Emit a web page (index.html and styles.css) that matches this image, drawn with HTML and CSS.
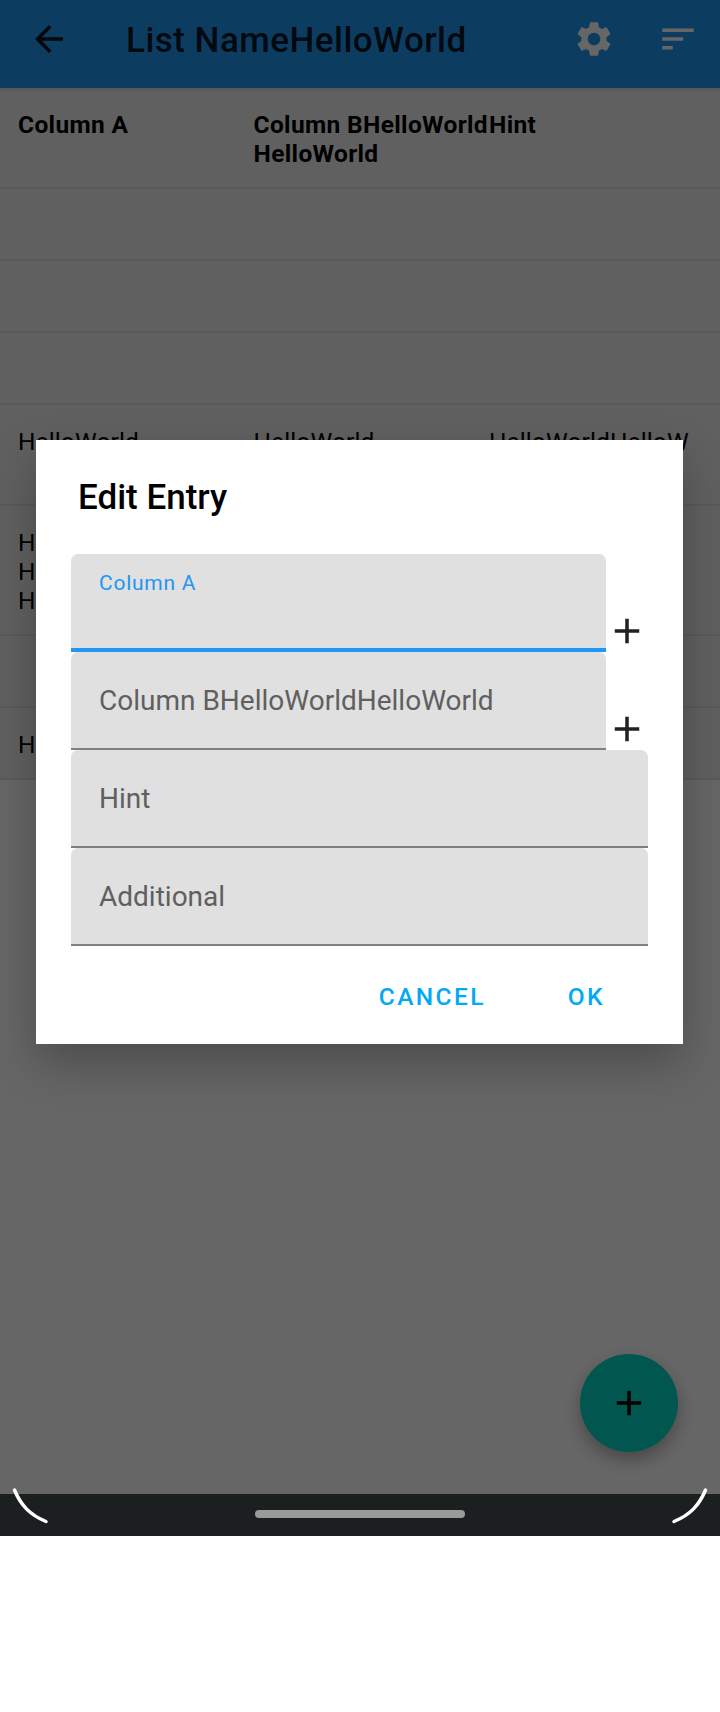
FILE: index.html
```html
<!DOCTYPE html>
<html lang="en">
<head>
<meta charset="utf-8">
<title>List</title>
<link rel="stylesheet" href="styles.css">
</head>
<body>
<div class="screen">
  <header class="appbar">
    <svg class="icon icon-back" viewBox="0 0 24 24"><path d="M20 11H7.83l5.59-5.59L12 4l-8 8 8 8 1.41-1.41L7.83 13H20v-2z"/></svg>
    <h1 class="appbar-title">List NameHelloWorld</h1>
    <svg class="icon icon-light" viewBox="0 0 24 24"><path d="M19.14 12.94c.04-.3.06-.61.06-.94 0-.32-.02-.64-.07-.94l2.03-1.58c.18-.14.23-.41.12-.61l-1.92-3.32c-.12-.22-.37-.29-.59-.22l-2.39.96c-.5-.38-1.03-.7-1.62-.94l-.36-2.54c-.04-.24-.24-.41-.48-.41h-3.84c-.24 0-.43.17-.47.41l-.36 2.54c-.59.24-1.13.57-1.62.94l-2.39-.96c-.22-.08-.47 0-.59.22L2.74 8.87c-.12.21-.08.47.12.61l2.03 1.58c-.05.3-.09.63-.09.94s.02.64.07.94l-2.03 1.58c-.18.14-.23.41-.12.61l1.92 3.32c.12.22.37.29.59.22l2.39-.96c.5.38 1.03.7 1.62.94l.36 2.54c.05.24.24.41.48.41h3.84c.24 0 .44-.17.47-.41l.36-2.54c.59-.24 1.13-.56 1.62-.94l2.39.96c.22.08.47 0 .59-.22l1.92-3.32c.12-.22.07-.47-.12-.61l-2.01-1.58zM12 15.6c-1.98 0-3.6-1.62-3.6-3.6s1.62-3.6 3.6-3.6 3.6 1.62 3.6 3.6-1.62 3.6-3.6 3.6z"/></svg>
    <svg class="icon icon-light" viewBox="0 0 24 24"><path d="M3 18h6v-2H3v2zM3 6v2h18V6H3zm0 7h12v-2H3v2z"/></svg>
  </header>
  <main class="content">
    <div class="row row-head"><span>Column A</span><span>Column BHelloWorld<br>HelloWorld</span><span>Hint</span></div>
    <div class="row"></div>
    <div class="row"></div>
    <div class="row"></div>
    <div class="row"><span>HelloWorld</span><span>HelloWorld</span><span>HelloWorldHelloWorld</span></div>
    <div class="row"><span>HelloWorld HelloWorld HelloWorld</span></div>
    <div class="row"></div>
    <div class="row"><span>HelloWorld</span></div>
  </main>
  <button class="fab"><svg class="icon" viewBox="0 0 24 24"><path d="M19 13h-6v6h-2v-6H5v-2h6V5h2v6h6v2z"/></svg></button>
  <div class="scrim">
    <section class="dialog">
      <h2 class="dialog-title">Edit Entry</h2>
      <div class="entry">
        <div class="field field-active"><span class="label">Column A</span></div>
        <svg class="icon icon-add" viewBox="0 0 24 24"><path d="M19 13h-6v6h-2v-6H5v-2h6V5h2v6h6v2z"/></svg>
      </div>
      <div class="entry">
        <div class="field">Column BHelloWorldHelloWorld</div>
        <svg class="icon icon-add" viewBox="0 0 24 24"><path d="M19 13h-6v6h-2v-6H5v-2h6V5h2v6h6v2z"/></svg>
      </div>
      <div class="entry"><div class="field">Hint</div></div>
      <div class="entry"><div class="field">Additional</div></div>
      <div class="actions"><button class="action">CANCEL</button><button class="action">OK</button></div>
    </section>
  </div>
  <footer class="navbar"><span class="pill"></span></footer>
  <svg class="corner corner-left" viewBox="0 0 40 40"><path d="M4.500 4C11 19.500 20 29 36 35.500"/></svg>
  <svg class="corner corner-right" viewBox="0 0 40 40"><path d="M4.500 4C11 19.500 20 29 36 35.500"/></svg>
</div>
</body>
</html>
```

FILE: styles.css
```css
* { box-sizing: border-box; }
body { margin: 0; background: #fff; font-family: Roboto, sans-serif; color: #000; }
h1, h2 { margin: 0; font-weight: 500; }
button { border: 0; padding: 0; font: inherit; background: none; }

.screen { position: relative; width: 720px; height: 1536px; display: flex; flex-direction: column; overflow: hidden; background: #fff; }
.icon { width: 42px; height: 42px; flex: none; display: block; }
.icon-light { fill: #fff; }
.icon-back { fill: rgba(0, 0, 0, .87); }

.appbar { height: 88px; flex: none; display: flex; padding: 18px 21px 0 28px; background: #2196f3; box-shadow: 0 1px 4px rgba(0, 0, 0, .2); z-index: 1; }
.appbar-title { flex: 1; margin-left: 56px; padding-top: 2px; color: rgba(0, 0, 0, .87); font-size: 35px; line-height: 42px; letter-spacing: .48px; white-space: nowrap; }
.appbar .icon-light + .icon-light { margin-left: 42px; }

.content { flex: 1; }
.row { min-height: 72px; display: grid; grid-template-columns: 200px 200px 200px; column-gap: 35.5px; padding: 22px 0 19px 18px; border-bottom: 2px solid #e0e0e0; background: #f1f1f1; font-size: 24.5px; line-height: 29px; letter-spacing: .12px; overflow-wrap: anywhere; }
.row-head { grid-template-columns: 235.5px 235.5px 200px; column-gap: 0; font-weight: 700; letter-spacing: .35px; }
.row-head span { white-space: nowrap; }

.fab { position: absolute; right: 42px; bottom: 84px; width: 98px; height: 98px; border-radius: 50%; display: flex; align-items: center; justify-content: center; background: #03dac5; box-shadow: 0 8px 18px rgba(0, 0, 0, .3); }

.scrim { position: absolute; inset: 0 0 42px; padding: 440px 37px 0 36px; background: rgba(0, 0, 0, .6); z-index: 2; }
.dialog { height: 604px; padding: 37px 35px 0; background: #fff; box-shadow: 0 20px 42px rgba(0, 0, 0, .25); }
.dialog-title { height: 77px; padding-left: 7px; font-size: 35px; line-height: 42px; }
.entry { display: flex; align-items: flex-end; }
.field { flex: 1; height: 98px; padding: 0 28px; border-radius: 7px 7px 0 0; background: linear-gradient(#808080, #808080) bottom / 100% 2px no-repeat #e0e0e0; color: #5f5f5f; font-size: 28px; line-height: 97px; white-space: nowrap; }
.field-active { background: linear-gradient(#2196f3, #2196f3) bottom / 100% 4px no-repeat #e0e0e0; }
.label { display: block; padding-top: 16px; color: #2196f3; font-size: 21px; line-height: 26px; letter-spacing: .75px; }
.icon-add { fill: #212121; }
.actions { display: flex; justify-content: flex-end; gap: 82px; padding: 36px 43px 0 0; }
.action { color: #03a9f4; font-size: 24.5px; font-weight: 500; line-height: 29px; letter-spacing: 2.4px; }

.navbar { height: 42px; flex: none; display: flex; align-items: center; justify-content: center; padding-bottom: 2px; background: #1c1f20; }
.pill { width: 210px; height: 8px; border-radius: 4px; background: #989b9a; }
.corner { position: absolute; top: 1486px; width: 40px; height: 40px; z-index: 3; fill: none; stroke: #fff; stroke-width: 3.5px; stroke-linecap: round; }
.corner-left { left: 10px; }
.corner-right { right: 10px; transform: scaleX(-1); }
```
